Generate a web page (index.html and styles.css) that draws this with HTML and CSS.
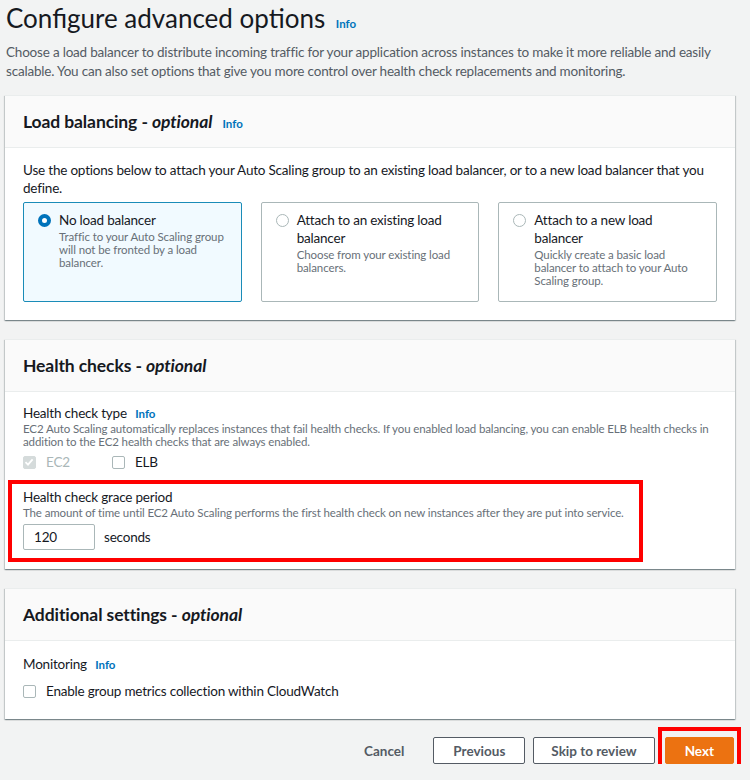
FILE: index.html
```html
<!DOCTYPE html>
<html>
<head>
<meta charset="utf-8">
<link rel="stylesheet" href="styles.css">
</head>
<body>
<div class="page">
  <h1 class="title">Configure advanced options <a class="info info-lg">Info</a></h1>
  <p class="lead">Choose a load balancer to distribute incoming traffic for your application across instances to make it more reliable and easily scalable. You can also set options that give you more control over health check replacements and monitoring.</p>

  <section class="card">
    <div class="card-head"><h2>Load balancing - <i>optional</i> <a class="info">Info</a></h2></div>
    <div class="card-body">
      <p class="body-text">Use the options below to attach your Auto Scaling group to an existing load balancer, or to a new load balancer that you define.</p>
      <div class="tiles">
        <div class="tile selected">
          <span class="radio on"></span>
          <div class="tile-text">
            <div class="tile-title">No load balancer</div>
            <div class="tile-desc">Traffic to your Auto Scaling group will not be fronted by a load balancer.</div>
          </div>
        </div>
        <div class="tile">
          <span class="radio"></span>
          <div class="tile-text">
            <div class="tile-title">Attach to an existing load balancer</div>
            <div class="tile-desc">Choose from your existing load balancers.</div>
          </div>
        </div>
        <div class="tile">
          <span class="radio"></span>
          <div class="tile-text">
            <div class="tile-title">Attach to a new load balancer</div>
            <div class="tile-desc">Quickly create a basic load balancer to attach to your Auto Scaling group.</div>
          </div>
        </div>
      </div>
    </div>
  </section>

  <section class="card">
    <div class="card-head"><h2>Health checks - <i>optional</i></h2></div>
    <div class="card-body body-hc">
      <div class="label">Health check type <a class="info">Info</a></div>
      <div class="desc">EC2 Auto Scaling automatically replaces instances that fail health checks. If you enabled load balancing, you can enable ELB health checks in addition to the EC2 health checks that are always enabled.</div>
      <div class="checks">
        <label class="check disabled"><span class="box checked"><svg viewBox="0 0 12 12" width="12" height="12"><path d="M2.5 6.2 L5 8.6 L9.6 3.4" fill="none" stroke="#fff" stroke-width="1.8"/></svg></span>EC2</label>
        <label class="check"><span class="box"></span>ELB</label>
      </div>
      <div class="highlight">
        <div class="label">Health check grace period</div>
        <div class="desc">The amount of time until EC2 Auto Scaling performs the first health check on new instances after they are put into service.</div>
        <div class="input-row">
          <div class="input">120</div>
          <span class="unit">seconds</span>
        </div>
      </div>
    </div>
  </section>

  <section class="card">
    <div class="card-head"><h2>Additional settings - <i>optional</i></h2></div>
    <div class="card-body body-add">
      <div class="label">Monitoring <a class="info">Info</a></div>
      <label class="check single"><span class="box"></span>Enable group metrics collection within CloudWatch</label>
    </div>
  </section>

  <div class="footer">
    <button class="btn link">Cancel</button>
    <button class="btn">Previous</button>
    <button class="btn skip">Skip to review</button>
    <button class="btn primary">Next</button>
  </div>
</div>
</body>
</html>
```

FILE: styles.css
```css
* { box-sizing: border-box; }
body {
  margin: 0;
  background: #f2f3f3;
  font-family: Lato, "Noto Sans", sans-serif;
  color: #16191f;
  letter-spacing: -0.2px;
}
.page {
  padding: 0 15px 0 5px;
}
.title {
  margin: 0;
  padding: 1px 0 0 1px;
  font-size: 26px;
  line-height: 34px;
  font-weight: 400;
  letter-spacing: 0;
  color: #16191f;
}
.info {
  color: #0073bb;
  font-weight: 700;
  font-size: 11.5px;
  line-height: 1;
  letter-spacing: 0;
  margin-left: 6px;
}
.info-lg { margin-left: 4px; }
.lead {
  margin: 8px 0 0 1px;
  font-size: 13.5px;
  line-height: 19px;
  color: #545b64;
}
.card {
  margin-top: 14px;
  background: #fff;
  border-top: 1px solid #eaeded;
  box-shadow: 0 1px 1px 0 rgba(0,28,36,.3), 1px 1px 1px 0 rgba(0,28,36,.15), -1px 1px 1px 0 rgba(0,28,36,.15);
}
.card + .card { margin-top: 19px; }
.card-head {
  background: #fafafa;
  border-bottom: 1px solid #eaeded;
  padding: 15px 18px 14px;
}
.card-head h2 {
  margin: 0;
  font-size: 17.5px;
  line-height: 22px;
  font-weight: 700;
  letter-spacing: -0.1px;
}
.card-head h2 i { font-weight: 700; }
.card-body {
  padding: 13px 18px 18px;
}
.body-text {
  margin: 0;
  font-size: 13.5px;
  line-height: 18px;
}
.tiles {
  margin-top: 5px;
  display: grid;
  grid-template-columns: repeat(3, 1fr);
  gap: 19px;
}
.tile {
  min-height: 100px;
  border: 1px solid #aab7b8;
  border-radius: 2px;
  padding: 8px 14px 8px 14px;
  display: flex;
  gap: 8px;
  background: #fff;
}
.tile.selected {
  border-color: #1a8cb8;
  background: #f1faff;
}
.radio {
  flex: none;
  width: 13px;
  height: 13px;
  margin-top: 3px;
  border-radius: 50%;
  border: 1px solid #aab7b8;
  background: #fff;
}
.radio.on {
  border: 4px solid #0073bb;
}
.tile-title {
  font-size: 13.5px;
  line-height: 18px;
}
.tile-desc {
  margin-top: 1px;
  font-size: 11.5px;
  line-height: 13px;
  letter-spacing: -0.1px;
  color: #687078;
}
.label {
  font-size: 13.5px;
  line-height: 18px;
}
.label .info { margin-left: 5px; }
.desc {
  font-size: 11.5px;
  line-height: 13px;
  letter-spacing: -0.12px;
  color: #687078;
}
.body-hc { padding: 12px 18px 7px; }
.checks {
  margin-top: 5px;
  display: flex;
}
.check {
  display: flex;
  align-items: center;
  gap: 10px;
  font-size: 13.5px;
  line-height: 18px;
}
.checks .check { width: 89px; }
.check.disabled { color: #aab7b8; }
.box {
  width: 13px;
  height: 13px;
  border: 1px solid #aab7b8;
  border-radius: 2px;
  background: #fff;
  display: inline-flex;
}
.box svg { display: block; margin: -1px 0 0 -1px; }
.box.checked {
  background: #d5dbdb;
  border-color: #d5dbdb;
}
.highlight {
  margin: 9px 0 0 -15px;
  width: 635px;
  border: 4px solid #ff0000;
  padding: 4px 11px 8px;
}
.input-row {
  margin-top: 5px;
  display: flex;
  align-items: center;
  gap: 9px;
}
.input {
  width: 72px;
  height: 26px;
  border: 1px solid #aab7b8;
  border-radius: 2px;
  padding: 0 10px;
  font-size: 13.5px;
  line-height: 24px;
}
.unit { font-size: 13.5px; }
.body-add { padding: 14px 18px 19px; }
.check.single { margin-top: 9px; }
.footer {
  margin-top: 18px;
  display: flex;
  justify-content: flex-end;
  align-items: center;
  gap: 8px;
  padding-right: 1px;
}
.btn {
  font-family: inherit;
  font-size: 13.5px;
  font-weight: 700;
  letter-spacing: 0;
  color: #545b64;
  background: #fff;
  border: 1px solid #545b64;
  border-radius: 2px;
  height: 27px;
  padding: 0 19px;
  cursor: pointer;
}
.btn.skip { padding: 0 17px; }
.btn.link {
  border-color: transparent;
  background: transparent;
  padding: 0 18px;
  margin-right: 2px;
}
.btn.primary {
  position: relative;
  margin-left: 2px;
  background: #ec7211;
  border-color: #ec7211;
  color: #fff;
  padding: 0 19px;
}
.btn.primary::after {
  content: "";
  position: absolute;
  left: -8px;
  right: -8px;
  top: -11px;
  bottom: -11px;
  border: 4px solid #ff0000;
}
```
